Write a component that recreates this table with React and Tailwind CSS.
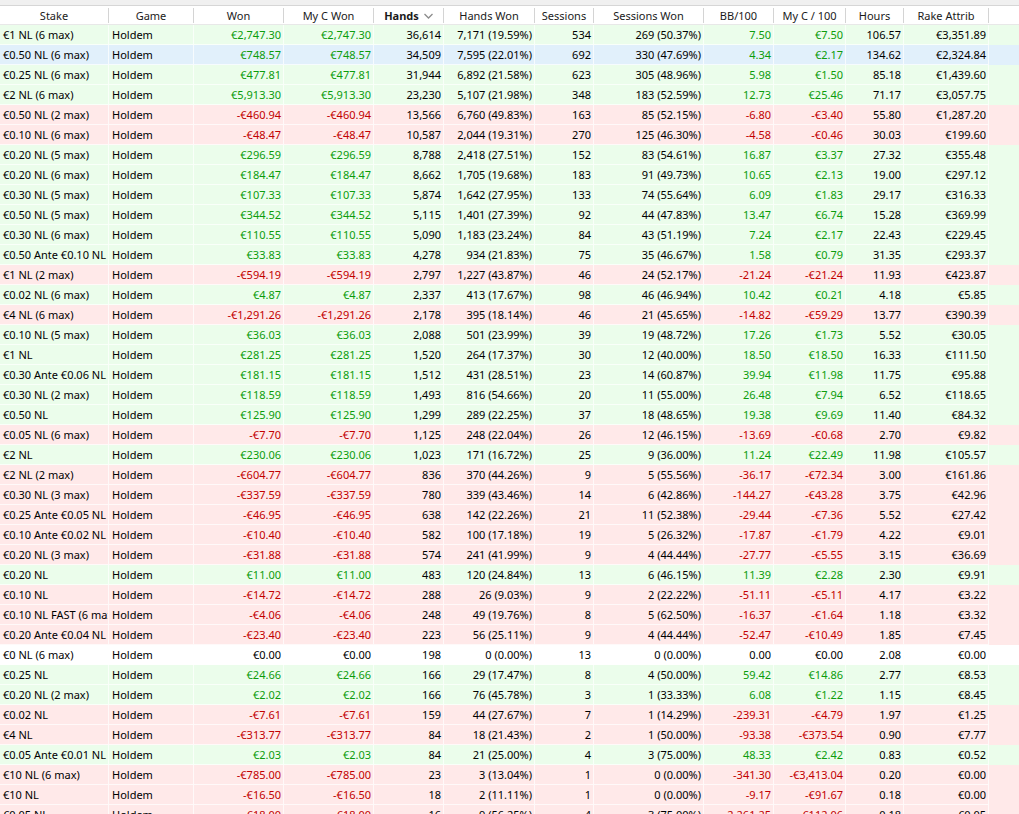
import React from "react";

const cols = [
  { name: "Stake", align: "left" },
  { name: "Game", align: "left" },
  { name: "Won", align: "right", colored: true },
  { name: "My C Won", align: "right", colored: true },
  { name: "Hands", align: "right", bold: true, sort: true },
  { name: "Hands Won", align: "right" },
  { name: "Sessions", align: "right" },
  { name: "Sessions Won", align: "right" },
  { name: "BB/100", align: "right", colored: true },
  { name: "My C / 100", align: "right", colored: true },
  { name: "Hours", align: "right" },
  { name: "Rake Attrib", align: "right" },
];

const raw = [
  ["g", "€1 NL (6 max)", "€2,747.30", "€2,747.30", "36,614", "7,171 (19.59%)", "534", "269 (50.37%)", "7.50", "€7.50", "106.57", "€3,351.89"],
  ["b", "€0.50 NL (6 max)", "€748.57", "€748.57", "34,509", "7,595 (22.01%)", "692", "330 (47.69%)", "4.34", "€2.17", "134.62", "€2,324.84"],
  ["g", "€0.25 NL (6 max)", "€477.81", "€477.81", "31,944", "6,892 (21.58%)", "623", "305 (48.96%)", "5.98", "€1.50", "85.18", "€1,439.60"],
  ["g", "€2 NL (6 max)", "€5,913.30", "€5,913.30", "23,230", "5,107 (21.98%)", "348", "183 (52.59%)", "12.73", "€25.46", "71.17", "€3,057.75"],
  ["r", "€0.50 NL (2 max)", "-€460.94", "-€460.94", "13,566", "6,760 (49.83%)", "163", "85 (52.15%)", "-6.80", "-€3.40", "55.80", "€1,287.20"],
  ["r", "€0.10 NL (6 max)", "-€48.47", "-€48.47", "10,587", "2,044 (19.31%)", "270", "125 (46.30%)", "-4.58", "-€0.46", "30.03", "€199.60"],
  ["g", "€0.20 NL (5 max)", "€296.59", "€296.59", "8,788", "2,418 (27.51%)", "152", "83 (54.61%)", "16.87", "€3.37", "27.32", "€355.48"],
  ["g", "€0.20 NL (6 max)", "€184.47", "€184.47", "8,662", "1,705 (19.68%)", "183", "91 (49.73%)", "10.65", "€2.13", "19.00", "€297.12"],
  ["g", "€0.30 NL (5 max)", "€107.33", "€107.33", "5,874", "1,642 (27.95%)", "133", "74 (55.64%)", "6.09", "€1.83", "29.17", "€316.33"],
  ["g", "€0.50 NL (5 max)", "€344.52", "€344.52", "5,115", "1,401 (27.39%)", "92", "44 (47.83%)", "13.47", "€6.74", "15.28", "€369.99"],
  ["g", "€0.30 NL (6 max)", "€110.55", "€110.55", "5,090", "1,183 (23.24%)", "84", "43 (51.19%)", "7.24", "€2.17", "22.43", "€229.45"],
  ["g", "€0.50 Ante €0.10 NL (6 max)", "€33.83", "€33.83", "4,278", "934 (21.83%)", "75", "35 (46.67%)", "1.58", "€0.79", "31.35", "€293.37"],
  ["r", "€1 NL (2 max)", "-€594.19", "-€594.19", "2,797", "1,227 (43.87%)", "46", "24 (52.17%)", "-21.24", "-€21.24", "11.93", "€423.87"],
  ["g", "€0.02 NL (6 max)", "€4.87", "€4.87", "2,337", "413 (17.67%)", "98", "46 (46.94%)", "10.42", "€0.21", "4.18", "€5.85"],
  ["r", "€4 NL (6 max)", "-€1,291.26", "-€1,291.26", "2,178", "395 (18.14%)", "46", "21 (45.65%)", "-14.82", "-€59.29", "13.77", "€390.39"],
  ["g", "€0.10 NL (5 max)", "€36.03", "€36.03", "2,088", "501 (23.99%)", "39", "19 (48.72%)", "17.26", "€1.73", "5.52", "€30.05"],
  ["g", "€1 NL", "€281.25", "€281.25", "1,520", "264 (17.37%)", "30", "12 (40.00%)", "18.50", "€18.50", "16.33", "€111.50"],
  ["g", "€0.30 Ante €0.06 NL (6 max)", "€181.15", "€181.15", "1,512", "431 (28.51%)", "23", "14 (60.87%)", "39.94", "€11.98", "11.75", "€95.88"],
  ["g", "€0.30 NL (2 max)", "€118.59", "€118.59", "1,493", "816 (54.66%)", "20", "11 (55.00%)", "26.48", "€7.94", "6.52", "€118.65"],
  ["g", "€0.50 NL", "€125.90", "€125.90", "1,299", "289 (22.25%)", "37", "18 (48.65%)", "19.38", "€9.69", "11.40", "€84.32"],
  ["r", "€0.05 NL (6 max)", "-€7.70", "-€7.70", "1,125", "248 (22.04%)", "26", "12 (46.15%)", "-13.69", "-€0.68", "2.70", "€9.82"],
  ["g", "€2 NL", "€230.06", "€230.06", "1,023", "171 (16.72%)", "25", "9 (36.00%)", "11.24", "€22.49", "11.98", "€105.57"],
  ["r", "€2 NL (2 max)", "-€604.77", "-€604.77", "836", "370 (44.26%)", "9", "5 (55.56%)", "-36.17", "-€72.34", "3.00", "€161.86"],
  ["r", "€0.30 NL (3 max)", "-€337.59", "-€337.59", "780", "339 (43.46%)", "14", "6 (42.86%)", "-144.27", "-€43.28", "3.75", "€42.96"],
  ["r", "€0.25 Ante €0.05 NL (6 max)", "-€46.95", "-€46.95", "638", "142 (22.26%)", "21", "11 (52.38%)", "-29.44", "-€7.36", "5.52", "€27.42"],
  ["r", "€0.10 Ante €0.02 NL (6 max)", "-€10.40", "-€10.40", "582", "100 (17.18%)", "19", "5 (26.32%)", "-17.87", "-€1.79", "4.22", "€9.01"],
  ["r", "€0.20 NL (3 max)", "-€31.88", "-€31.88", "574", "241 (41.99%)", "9", "4 (44.44%)", "-27.77", "-€5.55", "3.15", "€36.69"],
  ["g", "€0.20 NL", "€11.00", "€11.00", "483", "120 (24.84%)", "13", "6 (46.15%)", "11.39", "€2.28", "2.30", "€9.91"],
  ["r", "€0.10 NL", "-€14.72", "-€14.72", "288", "26 (9.03%)", "9", "2 (22.22%)", "-51.11", "-€5.11", "4.17", "€3.22"],
  ["r", "€0.10 NL FAST (6 max)", "-€4.06", "-€4.06", "248", "49 (19.76%)", "8", "5 (62.50%)", "-16.37", "-€1.64", "1.18", "€3.32"],
  ["r", "€0.20 Ante €0.04 NL (6 max)", "-€23.40", "-€23.40", "223", "56 (25.11%)", "9", "4 (44.44%)", "-52.47", "-€10.49", "1.85", "€7.45"],
  ["w", "€0 NL (6 max)", "€0.00", "€0.00", "198", "0 (0.00%)", "13", "0 (0.00%)", "0.00", "€0.00", "2.08", "€0.00"],
  ["g", "€0.25 NL", "€24.66", "€24.66", "166", "29 (17.47%)", "8", "4 (50.00%)", "59.42", "€14.86", "2.77", "€8.53"],
  ["g", "€0.20 NL (2 max)", "€2.02", "€2.02", "166", "76 (45.78%)", "3", "1 (33.33%)", "6.08", "€1.22", "1.15", "€8.45"],
  ["r", "€0.02 NL", "-€7.61", "-€7.61", "159", "44 (27.67%)", "7", "1 (14.29%)", "-239.31", "-€4.79", "1.97", "€1.25"],
  ["r", "€4 NL", "-€313.77", "-€313.77", "84", "18 (21.43%)", "2", "1 (50.00%)", "-93.38", "-€373.54", "0.90", "€7.77"],
  ["g", "€0.05 Ante €0.01 NL (6 max)", "€2.03", "€2.03", "84", "21 (25.00%)", "4", "3 (75.00%)", "48.33", "€2.42", "0.83", "€0.52"],
  ["r", "€10 NL (6 max)", "-€785.00", "-€785.00", "23", "3 (13.04%)", "1", "0 (0.00%)", "-341.30", "-€3,413.04", "0.20", "€0.00"],
  ["r", "€10 NL", "-€16.50", "-€16.50", "18", "2 (11.11%)", "1", "0 (0.00%)", "-9.17", "-€91.67", "0.18", "€0.00"],
  ["r", "€0.05 NL", "-€18.00", "-€18.00", "16", "9 (56.25%)", "4", "3 (75.00%)", "-2,261.25", "-€112.06", "0.18", "€0.05"],
];

const grid =
  "grid grid-cols-[109px_85px_90px_90px_70px_91px_59px_110px_70px_72px_58px_85px]";

const rowBg = {
  g: "bg-[#ebfdeb]",
  r: "bg-[#ffe9e9]",
  b: "bg-[#e1f0fb]",
  w: "bg-white",
};

const cellText = {
  g: "text-[#0c9c0c]",
  r: "text-[#c20000]",
  b: "text-[#0c9c0c]",
  w: "text-black",
};

function SortArrow() {
  return (
    <svg width="9" height="6" viewBox="0 0 9 6" className="ml-[5px] mt-[2px]">
      <path d="M0.5 1 L4.5 5 L8.5 1" fill="none" stroke="#8c8c8c" strokeWidth="1.3" />
    </svg>
  );
}

export default function App() {
  return (
    <div
      className="h-[814px] w-[1019px] overflow-hidden bg-white text-[11px] text-black"
      style={{ fontFamily: '"Noto Sans", "Open Sans", sans-serif' }}
    >
      <div className="h-[6px] bg-[#f0f0f0] border-b border-[#d6d6d6]" />
      <div className="h-[19px] border-b border-[#e8e8e8] bg-white">
        <div className={grid + " h-full"}>
          {cols.map((c) => (
            <div key={c.name} className="flex h-full items-center">
              <div
                className={
                  "flex flex-1 items-center justify-center leading-none text-[#1a1a1a] " +
                  (c.bold ? "font-bold" : "")
                }
              >
                <span>{c.name}</span>
                {c.sort && <SortArrow />}
              </div>
              <div className="h-[15px] w-px bg-[#d4d4d4]" />
            </div>
          ))}
        </div>
      </div>
      {raw.map((r, i) => {
        const [kind, stake, ...rest] = r;
        const vals = [stake, "Holdem", ...rest];
        return (
          <div key={i} className={grid + " h-[20px] " + rowBg[kind]}>
            {vals.map((v, j) => {
              const c = cols[j];
              return (
                <div
                  key={j}
                  className={
                    "flex h-[20px] items-center overflow-hidden whitespace-nowrap border-b border-r border-white/70 leading-none " +
                    (c.align === "left" ? "justify-start pl-[3px] " : "justify-end pr-[2px] ") +
                    (c.colored ? cellText[kind] : "text-black")
                  }
                >
                  {v}
                </div>
              );
            })}
          </div>
        );
      })}
    </div>
  );
}
